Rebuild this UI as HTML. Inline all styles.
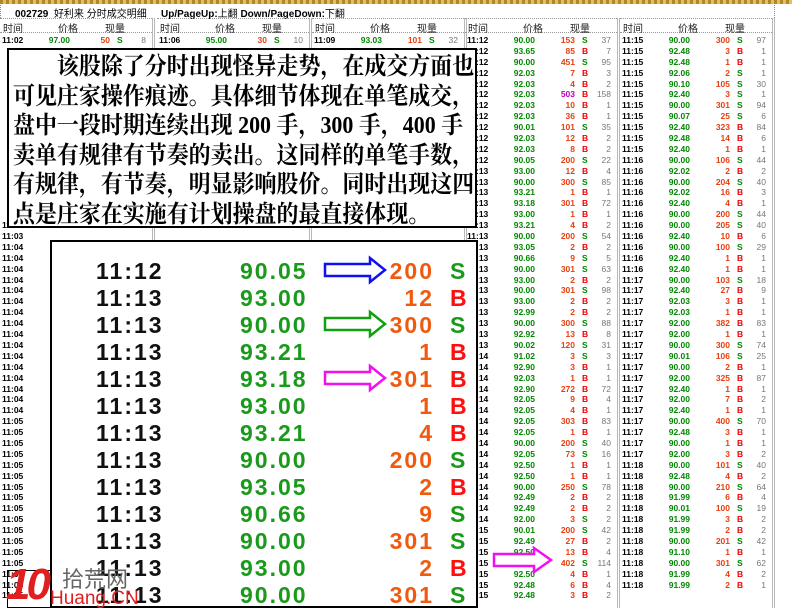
<!DOCTYPE html>
<html><head><meta charset="utf-8">
<style>
*{margin:0;padding:0;box-sizing:border-box}
body{width:792px;height:615px;background:#fff;position:relative;overflow:hidden;font-family:"Liberation Sans","Noto Sans CJK SC",sans-serif}
.top{position:absolute;left:0;top:0;width:792px;height:4px;background:repeating-linear-gradient(90deg,#b08828 0 3px,#e0c060 3px 6px)}
.ttl{position:absolute;top:5px;left:0;width:775px;height:13px;font-size:10px;font-weight:bold;border-left:1px dotted #888;border-right:1px dotted #888}
.ttl span{position:absolute;top:0}
.col{position:absolute;top:18px;width:155px;height:590px;border-right:3px double #b8b8b8}
.hd{height:15px;border-top:1px dotted #999;border-bottom:1px dotted #999;font-size:10px;position:relative}
.hd span{position:absolute;top:1px;color:#222}
.rows{position:absolute;top:17px;left:0;width:152px}
.rows p{height:10.9px;position:relative;font-size:8.5px;font-weight:bold;line-height:10.9px}
.rows p i{position:absolute;left:2px;font-style:normal;color:#000}
.rows p b{position:absolute;right:82px;color:#008800}
.rows p u{position:absolute;right:42px;text-decoration:none;color:#e84010}
.rows p s{position:absolute;left:117px;text-decoration:none;color:#008800}
.rows p s.b{color:#ee0000}
.rows p em{position:absolute;right:6px;font-style:normal;font-weight:normal;color:#777}
.m{color:#c000c0!important}
.tb{position:absolute;left:7px;top:48px;width:470px;height:180px;background:#fff;border:2px solid #000;font-family:"Liberation Serif","Noto Serif CJK SC",serif;font-weight:bold;font-size:24px;line-height:29.5px;padding:3px 0 0 4px;white-space:nowrap;color:#000;overflow:hidden}
.tb div{transform:scaleX(0.915);transform-origin:0 50%}
.big{position:absolute;left:50px;top:240px;width:428px;height:368px;background:#fff;border:2px solid #000}
.big p{position:absolute;left:0;width:424px;height:27px;font-size:23px;font-weight:bold;line-height:27px}
.big i{position:absolute;left:44px;font-style:normal;color:#111;letter-spacing:2px}
.big b{position:absolute;left:188px;color:#1a9a1a;letter-spacing:2px}
.big u{position:absolute;right:42px;text-decoration:none;color:#f05a10;letter-spacing:2px;text-align:right}
.big s{position:absolute;left:398px;text-decoration:none;color:#1a9a1a}
.big s.b{color:#ff1010}
</style></head><body>
<div class="top"></div>
<div class="ttl"><span style="left:14px">002729 &nbsp;<span style="font-weight:normal;position:static">好利来 分时成交明细</span></span><span style="left:160px">Up/PageUp:<span style="font-weight:normal;position:static">上翻</span> Down/PageDown:<span style="font-weight:normal;position:static">下翻</span></span></div>

<div class="col" style="left:0">
<div class="hd"><span style="left:3px">时间</span><span style="left:58px">价格</span><span style="left:105px">现量</span></div>
<div class="rows">
<p><i>11:02</i><b>97.00</b><u>50</u><s>S</s><em>8</em></p>
<p></p><p></p><p></p><p></p><p></p><p></p><p></p><p></p><p></p><p></p><p></p><p></p><p></p><p></p><p></p><p></p>
<p><i>11:03</i><b>96.88</b><u>9</u><s class="b">B</s><em>4</em></p>
<p><i>11:03</i></p><p><i>11:04</i></p><p><i>11:04</i></p><p><i>11:04</i></p><p><i>11:04</i></p><p><i>11:04</i></p><p><i>11:04</i></p><p><i>11:04</i></p><p><i>11:04</i></p><p><i>11:04</i></p><p><i>11:04</i></p><p><i>11:04</i></p><p><i>11:04</i></p><p><i>11:04</i></p><p><i>11:04</i></p><p><i>11:04</i></p><p><i>11:04</i></p>
<p><i>11:05</i></p><p><i>11:05</i></p><p><i>11:05</i></p><p><i>11:05</i></p><p><i>11:05</i></p><p><i>11:05</i></p><p><i>11:05</i></p><p><i>11:05</i></p><p><i>11:05</i></p><p><i>11:05</i></p><p><i>11:05</i></p><p><i>11:05</i></p><p><i>11:05</i></p><p><i>11:05</i></p><p><i>11:05</i></p><p><i>11:05</i></p><p><i>11:05</i></p>
</div></div>

<div class="col" style="left:157px">
<div class="hd"><span style="left:3px">时间</span><span style="left:58px">价格</span><span style="left:105px">现量</span></div>
<div class="rows">
<p><i>11:06</i><b>95.00</b><u>30</u><s>S</s><em>10</em></p>
<p></p><p></p><p></p><p></p><p></p><p></p><p></p><p></p><p></p><p></p><p></p><p></p><p></p><p></p><p></p><p></p>
<p><i>11:07</i><b>96.69</b><u>9</u><s class="b">B</s><em>2</em></p>
</div></div>

<div class="col" style="left:312px">
<div class="hd"><span style="left:3px">时间</span><span style="left:58px">价格</span><span style="left:105px">现量</span></div>
<div class="rows">
<p><i>11:09</i><b>93.03</b><u>101</u><s>S</s><em>32</em></p>
<p></p><p></p><p></p><p></p><p></p><p></p><p></p><p></p><p></p><p></p><p></p><p></p><p></p><p></p><p></p><p></p>
<p><i>11:10</i><b>92.00</b><u>21</u><s class="b">B</s><em>10</em></p>
</div></div>

<div class="col" style="left:465px">
<div class="hd"><span style="left:3px">时间</span><span style="left:58px">价格</span><span style="left:105px">现量</span></div>
<div class="rows">
<p><i>11:12</i><b>90.00</b><u>153</u><s>S</s><em>37</em></p>
<p><i>11:12</i><b>93.65</b><u>85</u><s class="b">B</s><em>7</em></p>
<p><i>11:12</i><b>90.00</b><u>451</u><s>S</s><em>95</em></p>
<p><i>11:12</i><b>92.03</b><u>7</u><s class="b">B</s><em>3</em></p>
<p><i>11:12</i><b>92.03</b><u>4</u><s class="b">B</s><em>2</em></p>
<p><i>11:12</i><b>92.03</b><u class="m">503</u><s class="b">B</s><em>158</em></p>
<p><i>11:12</i><b>92.03</b><u>10</u><s class="b">B</s><em>1</em></p>
<p><i>11:12</i><b>92.03</b><u>36</u><s class="b">B</s><em>1</em></p>
<p><i>11:12</i><b>90.01</b><u>101</u><s>S</s><em>35</em></p>
<p><i>11:12</i><b>92.03</b><u>12</u><s class="b">B</s><em>2</em></p>
<p><i>11:12</i><b>92.03</b><u>8</u><s class="b">B</s><em>2</em></p>
<p><i>11:12</i><b>90.05</b><u>200</u><s>S</s><em>22</em></p>
<p><i>11:13</i><b>93.00</b><u>12</u><s class="b">B</s><em>4</em></p>
<p><i>11:13</i><b>90.00</b><u>300</u><s>S</s><em>85</em></p>
<p><i>11:13</i><b>93.21</b><u>1</u><s class="b">B</s><em>1</em></p>
<p><i>11:13</i><b>93.18</b><u>301</u><s class="b">B</s><em>72</em></p>
<p><i>11:13</i><b>93.00</b><u>1</u><s class="b">B</s><em>1</em></p>
<p><i>11:13</i><b>93.21</b><u>4</u><s class="b">B</s><em>2</em></p>
<p><i>11:13</i><b>90.00</b><u>200</u><s>S</s><em>54</em></p>
<p><i>11:13</i><b>93.05</b><u>2</u><s class="b">B</s><em>2</em></p>
<p><i>11:13</i><b>90.66</b><u>9</u><s>S</s><em>5</em></p>
<p><i>11:13</i><b>90.00</b><u>301</u><s>S</s><em>63</em></p>
<p><i>11:13</i><b>93.00</b><u>2</u><s class="b">B</s><em>2</em></p>
<p><i>11:13</i><b>90.00</b><u>301</u><s>S</s><em>98</em></p>
<p><i>11:13</i><b>93.00</b><u>2</u><s class="b">B</s><em>2</em></p>
<p><i>11:13</i><b>92.99</b><u>2</u><s class="b">B</s><em>2</em></p>
<p><i>11:13</i><b>90.00</b><u>300</u><s>S</s><em>88</em></p>
<p><i>11:13</i><b>92.92</b><u>13</u><s class="b">B</s><em>8</em></p>
<p><i>11:13</i><b>90.02</b><u>120</u><s>S</s><em>31</em></p>
<p><i>11:14</i><b>91.02</b><u>3</u><s>S</s><em>3</em></p>
<p><i>11:14</i><b>92.90</b><u>3</u><s class="b">B</s><em>1</em></p>
<p><i>11:14</i><b>92.03</b><u>1</u><s class="b">B</s><em>1</em></p>
<p><i>11:14</i><b>92.90</b><u>272</u><s class="b">B</s><em>72</em></p>
<p><i>11:14</i><b>92.05</b><u>9</u><s class="b">B</s><em>4</em></p>
<p><i>11:14</i><b>92.05</b><u>4</u><s class="b">B</s><em>1</em></p>
<p><i>11:14</i><b>92.05</b><u>303</u><s class="b">B</s><em>83</em></p>
<p><i>11:14</i><b>92.05</b><u>1</u><s class="b">B</s><em>1</em></p>
<p><i>11:14</i><b>90.00</b><u>200</u><s>S</s><em>40</em></p>
<p><i>11:14</i><b>92.05</b><u>73</u><s>S</s><em>16</em></p>
<p><i>11:14</i><b>92.50</b><u>1</u><s class="b">B</s><em>1</em></p>
<p><i>11:14</i><b>92.50</b><u>1</u><s class="b">B</s><em>1</em></p>
<p><i>11:14</i><b>90.00</b><u>250</u><s>S</s><em>78</em></p>
<p><i>11:14</i><b>92.49</b><u>2</u><s class="b">B</s><em>2</em></p>
<p><i>11:14</i><b>92.49</b><u>2</u><s class="b">B</s><em>2</em></p>
<p><i>11:14</i><b>92.00</b><u>3</u><s>S</s><em>2</em></p>
<p><i>11:15</i><b>90.01</b><u>200</u><s>S</s><em>42</em></p>
<p><i>11:15</i><b>92.49</b><u>27</u><s class="b">B</s><em>2</em></p>
<p><i>11:15</i><b>92.50</b><u>13</u><s class="b">B</s><em>4</em></p>
<p><i>11:15</i><b></b><u>402</u><s>S</s><em>114</em></p>
<p><i>11:15</i><b>92.50</b><u>4</u><s class="b">B</s><em>1</em></p>
<p><i>11:15</i><b>92.48</b><u>6</u><s class="b">B</s><em>4</em></p>
<p><i>11:15</i><b>92.48</b><u>3</u><s class="b">B</s><em>2</em></p>
</div></div>

<div class="col" style="left:620px">
<div class="hd"><span style="left:3px">时间</span><span style="left:58px">价格</span><span style="left:105px">现量</span></div>
<div class="rows">
<p><i>11:15</i><b>90.00</b><u>300</u><s>S</s><em>97</em></p>
<p><i>11:15</i><b>92.48</b><u>3</u><s class="b">B</s><em>1</em></p>
<p><i>11:15</i><b>92.48</b><u>1</u><s class="b">B</s><em>1</em></p>
<p><i>11:15</i><b>92.06</b><u>2</u><s>S</s><em>1</em></p>
<p><i>11:15</i><b>90.10</b><u>105</u><s>S</s><em>30</em></p>
<p><i>11:15</i><b>92.40</b><u>3</u><s>S</s><em>1</em></p>
<p><i>11:15</i><b>90.00</b><u>301</u><s>S</s><em>94</em></p>
<p><i>11:15</i><b>90.07</b><u>25</u><s>S</s><em>6</em></p>
<p><i>11:15</i><b>92.40</b><u>323</u><s class="b">B</s><em>84</em></p>
<p><i>11:15</i><b>92.48</b><u>14</u><s class="b">B</s><em>6</em></p>
<p><i>11:15</i><b>92.40</b><u>1</u><s class="b">B</s><em>1</em></p>
<p><i>11:16</i><b>90.00</b><u>106</u><s>S</s><em>44</em></p>
<p><i>11:16</i><b>92.02</b><u>2</u><s class="b">B</s><em>2</em></p>
<p><i>11:16</i><b>90.00</b><u>204</u><s>S</s><em>40</em></p>
<p><i>11:16</i><b>92.02</b><u>16</u><s class="b">B</s><em>3</em></p>
<p><i>11:16</i><b>92.40</b><u>4</u><s class="b">B</s><em>1</em></p>
<p><i>11:16</i><b>90.00</b><u>200</u><s>S</s><em>44</em></p>
<p><i>11:16</i><b>90.00</b><u>205</u><s>S</s><em>40</em></p>
<p><i>11:16</i><b>92.40</b><u>10</u><s class="b">B</s><em>6</em></p>
<p><i>11:16</i><b>90.00</b><u>100</u><s>S</s><em>29</em></p>
<p><i>11:16</i><b>92.40</b><u>1</u><s class="b">B</s><em>1</em></p>
<p><i>11:16</i><b>92.40</b><u>1</u><s class="b">B</s><em>1</em></p>
<p><i>11:17</i><b>90.00</b><u>103</u><s>S</s><em>18</em></p>
<p><i>11:17</i><b>92.40</b><u>27</u><s class="b">B</s><em>9</em></p>
<p><i>11:17</i><b>92.03</b><u>3</u><s class="b">B</s><em>1</em></p>
<p><i>11:17</i><b>92.03</b><u>1</u><s class="b">B</s><em>1</em></p>
<p><i>11:17</i><b>92.00</b><u>382</u><s class="b">B</s><em>83</em></p>
<p><i>11:17</i><b>92.00</b><u>1</u><s class="b">B</s><em>1</em></p>
<p><i>11:17</i><b>90.00</b><u>300</u><s>S</s><em>74</em></p>
<p><i>11:17</i><b>90.01</b><u>106</u><s>S</s><em>25</em></p>
<p><i>11:17</i><b>90.00</b><u>2</u><s class="b">B</s><em>1</em></p>
<p><i>11:17</i><b>92.00</b><u>325</u><s class="b">B</s><em>87</em></p>
<p><i>11:17</i><b>92.40</b><u>1</u><s class="b">B</s><em>1</em></p>
<p><i>11:17</i><b>92.00</b><u>7</u><s class="b">B</s><em>2</em></p>
<p><i>11:17</i><b>92.40</b><u>1</u><s class="b">B</s><em>1</em></p>
<p><i>11:17</i><b>90.00</b><u>400</u><s>S</s><em>70</em></p>
<p><i>11:17</i><b>92.48</b><u>3</u><s class="b">B</s><em>1</em></p>
<p><i>11:17</i><b>90.00</b><u>1</u><s class="b">B</s><em>1</em></p>
<p><i>11:17</i><b>92.00</b><u>3</u><s class="b">B</s><em>2</em></p>
<p><i>11:18</i><b>90.00</b><u>101</u><s>S</s><em>40</em></p>
<p><i>11:18</i><b>92.48</b><u>4</u><s class="b">B</s><em>2</em></p>
<p><i>11:18</i><b>90.00</b><u>210</u><s>S</s><em>64</em></p>
<p><i>11:18</i><b>91.99</b><u>6</u><s class="b">B</s><em>4</em></p>
<p><i>11:18</i><b>90.01</b><u>100</u><s>S</s><em>19</em></p>
<p><i>11:18</i><b>91.99</b><u>3</u><s class="b">B</s><em>2</em></p>
<p><i>11:18</i><b>91.99</b><u>2</u><s class="b">B</s><em>2</em></p>
<p><i>11:18</i><b>90.00</b><u>201</u><s>S</s><em>42</em></p>
<p><i>11:18</i><b>91.10</b><u>1</u><s class="b">B</s><em>1</em></p>
<p><i>11:18</i><b>90.00</b><u>301</u><s>S</s><em>62</em></p>
<p><i>11:18</i><b>91.99</b><u>4</u><s class="b">B</s><em>2</em></p>
<p><i>11:18</i><b>91.99</b><u>2</u><s class="b">B</s><em>1</em></p>
</div></div>

<div class="tb"><div>　　该股除了分时出现怪异走势，在成交方面也</div><div>可见庄家操作痕迹。具体细节体现在单笔成交，</div><div>盘中一段时期连续出现 200 手，300 手，400 手</div><div>卖单有规律有节奏的卖出。这同样的单笔手数，</div><div>有规律，有节奏，明显影响股价。同时出现这四</div><div>点是庄家在实施有计划操盘的最直接体现。</div></div>

<div class="big">
<p style="top:16px"><i>11:12</i><b>90.05</b><u>200</u><s>S</s></p>
<p style="top:43px"><i>11:13</i><b>93.00</b><u>12</u><s class="b">B</s></p>
<p style="top:70px"><i>11:13</i><b>90.00</b><u>300</u><s>S</s></p>
<p style="top:97px"><i>11:13</i><b>93.21</b><u>1</u><s class="b">B</s></p>
<p style="top:124px"><i>11:13</i><b>93.18</b><u>301</u><s class="b">B</s></p>
<p style="top:151px"><i>11:13</i><b>93.00</b><u>1</u><s class="b">B</s></p>
<p style="top:178px"><i>11:13</i><b>93.21</b><u>4</u><s class="b">B</s></p>
<p style="top:205px"><i>11:13</i><b>90.00</b><u>200</u><s>S</s></p>
<p style="top:232px"><i>11:13</i><b>93.05</b><u>2</u><s class="b">B</s></p>
<p style="top:259px"><i>11:13</i><b>90.66</b><u>9</u><s>S</s></p>
<p style="top:286px"><i>11:13</i><b>90.00</b><u>301</u><s>S</s></p>
<p style="top:313px"><i>11:13</i><b>93.00</b><u>2</u><s class="b">B</s></p>
<p style="top:340px"><i>11:13</i><b>90.00</b><u>301</u><s>S</s></p>
</div>

<svg width="792" height="615" style="position:absolute;left:0;top:0" fill="#fff" stroke-width="2.5">
<path d="M325 264h45v-6l15 12-15 12v-6h-45z" stroke="#1010f0"/>
<path d="M325 318h45v-6l15 12-15 12v-6h-45z" stroke="#10a010"/>
<path d="M325 372h45v-6l15 12-15 12v-6h-45z" stroke="#f010f0"/>
<path d="M494 554h40v-6l17 12-17 12v-6h-40z" stroke="#f010f0"/>
</svg>

<div style="position:absolute;left:7px;top:570px;width:44px;height:38px;border:1px solid #000"></div>
<div style="position:absolute;left:6px;top:560px;font:bold italic 44px 'Liberation Sans',sans-serif;color:#e02020;letter-spacing:-4px">10</div>
<div style="position:absolute;left:62px;top:562px;font:22px 'Liberation Sans','Noto Sans CJK SC',sans-serif;color:#666">拾荒网</div>
<div style="position:absolute;left:50px;top:588px;font:19px 'Liberation Sans',sans-serif;color:#e02020">Huang.CN</div>
</body></html>
